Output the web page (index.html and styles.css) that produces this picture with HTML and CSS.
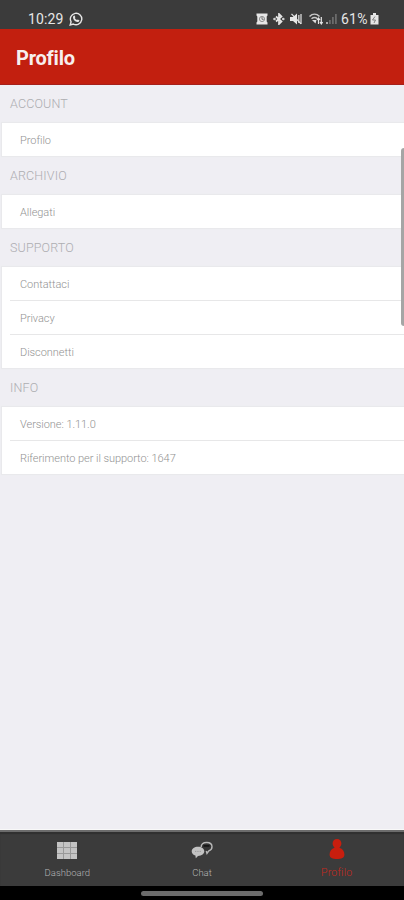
FILE: index.html
```html
<!DOCTYPE html>
<html lang="it">
<head>
<meta charset="utf-8">
<title>Profilo</title>
<link rel="stylesheet" href="styles.css">
</head>
<body>
<div class="app">
  <div class="status">
    <span class="time">10:29</span>
    <svg class="whatsapp" width="14" height="14" viewBox="0 0 14 14"><path d="M1.2 12.9l.9-3.1a5.7 5.7 0 1 1 2.2 2.2z" fill="none" stroke="#e6e6e6" stroke-width="1.4"/><path d="M4.6 3.8l1-.2.8 1.7-.6.8c.5 1 1.200 1.600 2.200 2l.8-.7 1.600.8c0 1.300-1 1.900-2 1.700C6 9.500 4.300 7.600 4 5.700c0-.8.200-1.400.6-1.900z" fill="#e6e6e6"/></svg>
    <div class="indicators">
      <svg width="12" height="12" viewBox="0 0 12 12"><path d="M.5.5h11v2l-.8 1v5l.8 1v2H.5v-2l.8-1v-5l-.8-1z" fill="#e6e6e6"/><circle cx="6" cy="6" r="2.600" fill="none" stroke="#858585" stroke-width=".9"/><path d="M6 4v2.300h1.700" fill="none" stroke="#666" stroke-width=".9"/></svg>
      <svg width="12" height="12" viewBox="0 0 12 12"><path d="M3 3.500l5.500 5L6 11V1l2.500 2.500L3 8.500" fill="none" stroke="#e6e6e6" stroke-width="1.700"/><circle cx="1.500" cy="6" r="1.300" fill="#d0d0d0"/><circle cx="10.300" cy="6" r="1.300" fill="#d0d0d0"/></svg>
      <svg width="12" height="12" viewBox="0 0 12 12"><path d="M0 4h3l4-3.500v11L3 8H0z" fill="#e6e6e6"/><path d="M8.800 2v8M11 1v10" stroke="#c4c4c4" stroke-width="1.500"/><path d="M1.500 .8l9.500 10" stroke="#e6e6e6" stroke-width="1.200"/></svg>
      <svg class="wifi" width="14" height="12" viewBox="0 0 14 12"><path d="M.5 3.500c3-3 7-3 10 0M2.500 5.800c2-1.700 4-1.700 6 0" fill="none" stroke="#c8c8c8" stroke-width="1.500"/><path d="M3 7h4.500l-1 3.500z" fill="#ddd"/><path d="M9.500 11V5M8 7l1.500-2L11 7M12.300 4v7M11 9l1.300 2 1.400-2" fill="none" stroke="#e6e6e6" stroke-width="1.200"/></svg>
      <svg class="signal" width="12" height="12" viewBox="0 0 12 12"><path d="M1 9h2v2H1z" fill="#aaa"/><path d="M4 7h1.800v4H4zM7 4h1.800v7H7zM10 1h1.800v10H10z" fill="#6b6b6b"/></svg>
      <span class="percent">61%</span>
      <svg width="9" height="12" viewBox="0 0 9 12"><path d="M3 0h3v2h2.500v9.500h-8V2H3z" fill="#e6e6e6"/><path d="M5 3.500L2.500 7h3L4 10" fill="none" stroke="#777" stroke-width=".9"/></svg>
    </div>
  </div>
  <header class="bar"><h1>Profilo</h1></header>
  <main>
    <h2 class="first">ACCOUNT</h2>
    <ul><li><span>Profilo</span></li></ul>
    <h2>ARCHIVIO</h2>
    <ul><li><span>Allegati</span></li></ul>
    <h2>SUPPORTO</h2>
    <ul><li><span>Contattaci</span></li><li><span>Privacy</span></li><li><span>Disconnetti</span></li></ul>
    <h2>INFO</h2>
    <ul><li><span>Versione: 1.11.0</span></li><li><span>Riferimento per il supporto: 1647</span></li></ul>
  </main>
  <nav>
    <a><svg width="22" height="22" viewBox="0 0 22 22"><path d="M1 3h20v17H1z" fill="#999"/><path d="M1 3h6v5H1zM8 3h6v5H8zM15 3h6v5h-6zM1 9h6v5H1zM8 9h6v5H8zM15 9h6v5h-6zM1 15h6v5H1zM8 15h6v5H8zM15 15h6v5h-6z" fill="#c4c4c4"/></svg><span>Dashboard</span></a>
    <a><svg width="22" height="22" viewBox="0 0 22 22"><path d="M10.200 8C10 5.200 12 3.500 15.700 3.500c3.500 0 5.300 1.600 5.300 4.200 0 2-1.200 3.500-3.200 4.200l-1.800 2.600-.7-2.500" fill="#343434" stroke="#b8b8b8" stroke-width="1.400"/><path d="M12.500 6.900h6" stroke="#151515" stroke-width="1.700"/><path d="M7 7.700c3.700 0 6.300 1.900 6.300 4.600S10.800 16.700 7 17l-2.200 2.300-.4-2.700C2.300 16 .7 14.400.7 12.500.7 9.600 3.500 7.700 7 7.700z" fill="#c2c2c2"/><path d="M4 12.400h6" stroke="#999" stroke-width="1" stroke-dasharray="1.300 1"/></svg><span>Chat</span></a>
    <a class="active"><svg width="22" height="22" viewBox="0 0 22 22"><path d="M11 0c2.700 0 4.400 1.900 4.400 4.500 0 1.700-.8 3.200-2 4.200 3.200.9 5 3.500 5 6.800 0 3.400-3 4.500-7.400 4.500s-7.400-1.100-7.400-4.500c0-3.300 1.800-5.900 5-6.800-1.200-1-2-2.500-2-4.200C6.600 1.900 8.300 0 11 0z" fill="#c81e0e"/></svg><span>Profilo</span></a>
  </nav>
  <div class="gesture"><i></i></div>
  <div class="edge-handle"></div>
</div>
</body>
</html>
```
FILE: styles.css
```css
* { box-sizing: border-box; }
body { margin: 0; font-family: Roboto, "Liberation Sans", sans-serif; }
.app { position: relative; display: flex; flex-direction: column; width: 404px; height: 900px; overflow: hidden; background: #efeef3; }
svg { display: block; flex: none; }

.status { display: flex; align-items: center; height: 29px; padding: 8px 25px 0 28px; background: #3b3b3b; color: #e6e6e6; font-size: 14px; font-weight: 400; line-height: 20px; }
.time { width: 41px; letter-spacing: .1px; }
.indicators { display: flex; align-items: center; gap: 5px; margin-left: auto; }
.wifi { margin-left: 2px; }
.signal { margin-left: -3px; }
.percent { width: 30px; margin-left: -1px; margin-right: -6px; letter-spacing: .2px; }

.bar { display: flex; align-items: center; height: 56px; padding: 2px 16px 0; background: #c21f0f; border-bottom: 1px solid #a5201b; }
h1 { margin: 0; color: #f7efee; font-size: 20px; font-weight: 700; line-height: 28px; letter-spacing: -.2px; }

main { flex: 1; border-bottom: 1px solid #f8f8f8; }
h2 { height: 39px; margin: 0; padding: 0 10px; color: #adadb1; font-size: 12.5px; font-weight: 300; line-height: 39px; letter-spacing: .15px; }
h2.first { height: 38px; line-height: 38px; }
ul { margin: 0 0 0 2px; padding: 0; list-style: none; background: #fff; box-shadow: 0 0 1px 1px #e9e9ec; }
li { height: 34px; padding-left: 8px; }
li:last-child { height: 33px; }
li span { display: block; height: 100%; padding-left: 10px; color: #929292; font-size: 11px; font-weight: 300; line-height: 35px; letter-spacing: -.05px; }
li:not(:last-child) span { border-bottom: 1px solid #e7e7e8; }

nav { display: flex; height: 56px; background: #3b3b3b; border-top: 2px solid #6c6c6c; box-shadow: inset 0 2px 1px #303030; }
nav a { flex: 1; display: flex; flex-direction: column; align-items: center; padding-top: 7px; color: #b5b5b5; font-size: 9.5px; font-weight: 300; line-height: 14px; }
nav span { margin-top: 5px; }
nav .active { color: #c52a1e; font-size: 10.5px; letter-spacing: .2px; }
.gesture { display: flex; justify-content: center; height: 14px; padding-top: 5px; background: #000; }
.gesture i { width: 122px; height: 5px; border-radius: 3px; background: #6b6b6b; }
.edge-handle { position: absolute; top: 148px; right: 0; width: 3px; height: 178px; border-radius: 3px 0 0 3px; background: #a5a5a5; }
```
